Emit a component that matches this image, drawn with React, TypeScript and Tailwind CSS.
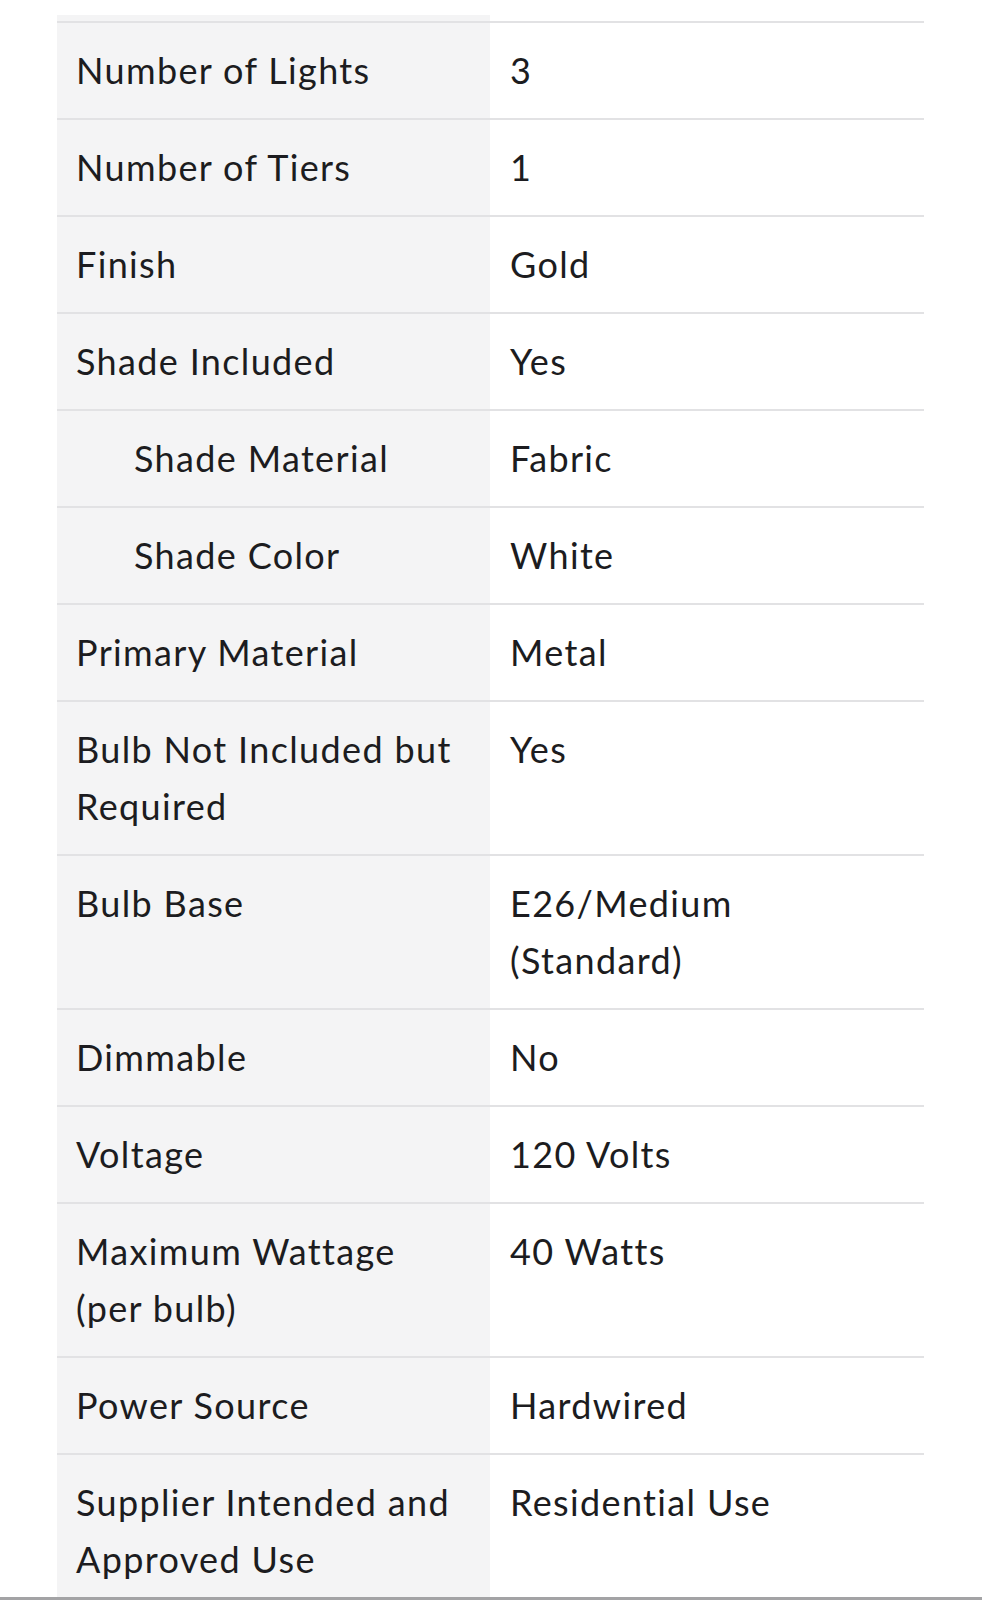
import React from "react";

const rows: { label: string; value: string; indent?: boolean }[] = [
  { label: "Number of Lights", value: "3" },
  { label: "Number of Tiers", value: "1" },
  { label: "Finish", value: "Gold" },
  { label: "Shade Included", value: "Yes" },
  { label: "Shade Material", value: "Fabric", indent: true },
  { label: "Shade Color", value: "White", indent: true },
  { label: "Primary Material", value: "Metal" },
  { label: "Bulb Not Included but Required", value: "Yes" },
  { label: "Bulb Base", value: "E26/Medium (Standard)" },
  { label: "Dimmable", value: "No" },
  { label: "Voltage", value: "120 Volts" },
  { label: "Maximum Wattage (per bulb)", value: "40 Watts" },
  { label: "Power Source", value: "Hardwired" },
  { label: "Supplier Intended and Approved Use", value: "Residential Use" },
];

export default function App() {
  return (
    <div
      className="h-[1600px] w-[982px] overflow-hidden bg-white border-b-[3px] border-[#a3a3a5] text-[#1c1c20]"
      style={{ fontFamily: "Lato, 'Noto Sans', sans-serif" }}
    >
      <div className="mt-[15px] ml-[57px] w-[867px]">
        <div className="flex h-[6px]">
          <div className="w-[433px] bg-[#f4f4f5]" />
          <div className="flex-1" />
        </div>
        {rows.map((r) => (
          <div
            key={r.label}
            className="flex border-t-2 border-[#e2e2e4] text-[36px] leading-[57px] tracking-[1.35px]"
          >
            <div
              className={`w-[433px] shrink-0 bg-[#f4f4f5] pt-[19px] pb-[19px] pr-[18px] ${
                r.indent ? "pl-[77px]" : "pl-[19px]"
              }`}
            >
              {r.label}
            </div>
            <div className="flex-1 pt-[19px] pb-[19px] pl-[20px] pr-[18px]">{r.value}</div>
          </div>
        ))}
      </div>
    </div>
  );
}
